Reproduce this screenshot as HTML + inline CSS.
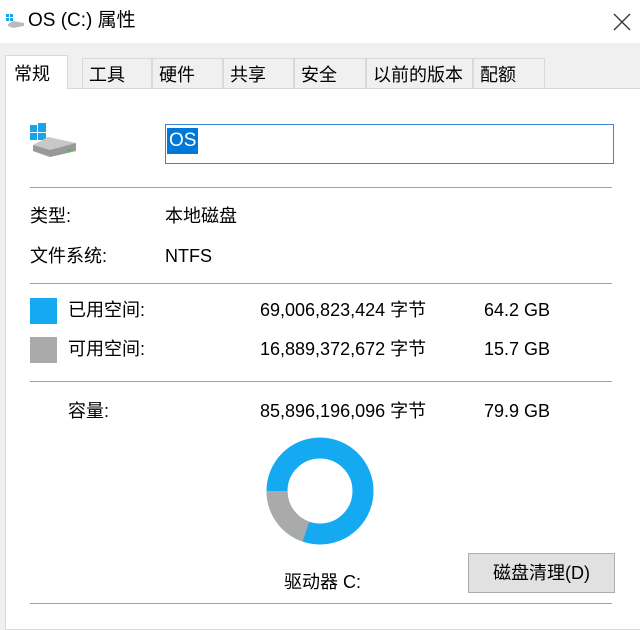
<!DOCTYPE html>
<html><head><meta charset="utf-8"><style>
body{margin:0;width:640px;height:624px;background:#f0f0f0;position:relative;overflow:hidden;font-family:"Liberation Sans","Noto Sans CJK SC",sans-serif;color:#000;font-size:18px}
.a{position:absolute;white-space:nowrap;line-height:22px}
.title{position:absolute;left:0;top:0;width:640px;height:43px;background:#fff}
.panel{position:absolute;left:5px;top:88px;width:640px;height:540px;background:#fff;border:1px solid #d9d9d9}
.tab{position:absolute;top:58px;height:30px;background:#f0f0f0;border:1px solid #d9d9d9;border-bottom:none;font-size:18px;line-height:32px;padding-left:6px;box-sizing:border-box}
.sep{position:absolute;left:30px;width:582px;height:1px;background:#a0a0a0}
</style></head><body>
<div class="title"></div>
<svg class="a" style="left:5px;top:13px" width="20" height="16"><rect x="1" y="1" width="3" height="3" fill="#1aa3e8"/><rect x="5" y="1" width="3" height="3" fill="#1aa3e8"/><rect x="1" y="5" width="3" height="3" fill="#1aa3e8"/><rect x="5" y="5" width="3" height="3" fill="#1aa3e8"/><path d="M3 11 L8 8 L19 10 L19 13 L8 15 L3 13Z" fill="#bbb"/></svg>
<div class="a" style="left:28px;top:10px;font-size:19px">OS (C:) 属性</div>
<svg class="a" style="left:612px;top:12px" width="20" height="20"><path d="M2 2 L18 18 M18 2 L2 18" stroke="#333" stroke-width="1.3"/></svg>
<div class="panel"></div>
<div class="tab" style="left:5px;top:55px;width:63px;height:34px;background:#fff;z-index:2;padding-left:8px;line-height:36px">常规</div>
<div class="tab" style="left:82px;width:70px">工具</div>
<div class="tab" style="left:152px;width:71px">硬件</div>
<div class="tab" style="left:223px;width:71px">共享</div>
<div class="tab" style="left:294px;width:72px">安全</div>
<div class="tab" style="left:366px;width:107px">以前的版本</div>
<div class="tab" style="left:473px;width:72px">配额</div>
<svg class="a" style="left:30px;top:123px" width="50" height="36"><rect x="0" y="2" width="7" height="7" fill="#1aa3e8"/><rect x="8" y="0" width="8" height="9" fill="#1aa3e8"/><rect x="0" y="10" width="7" height="7" fill="#1aa3e8"/><rect x="8" y="10" width="8" height="7" fill="#1aa3e8"/><path d="M3 22 L18 14 L46 20 L46 28 L20 34 L3 28Z" fill="#c8c8c8"/><path d="M3 22 L20 27 L46 20 L46 28 L20 34 L3 28Z" fill="#999"/><rect x="38" y="26" width="3" height="2" fill="#3c3"/></svg>
<div class="a" style="left:165px;top:124px;width:447px;height:38px;border:1px solid #3d86d6;background:#fff"></div>
<div class="a" style="left:167px;top:128px;background:#0078d7;color:#fff;font-size:19px;line-height:26px;padding:0 2px">OS</div>
<div class="sep" style="top:187px"></div>
<div class="a" style="left:30px;top:205px">类型:</div>
<div class="a" style="left:165px;top:205px">本地磁盘</div>
<div class="a" style="left:30px;top:245px">文件系统:</div>
<div class="a" style="left:165px;top:245px">NTFS</div>
<div class="sep" style="top:283px"></div>
<div class="a" style="left:30px;top:298px;width:27px;height:26px;background:#14a9f0"></div>
<div class="a" style="left:68px;top:299px">已用空间:</div>
<div class="a" style="left:260px;top:299px">69,006,823,424 字节</div>
<div class="a" style="left:484px;top:299px">64.2 GB</div>
<div class="a" style="left:30px;top:337px;width:27px;height:26px;background:#aaa"></div>
<div class="a" style="left:68px;top:338px">可用空间:</div>
<div class="a" style="left:260px;top:338px">16,889,372,672 字节</div>
<div class="a" style="left:484px;top:338px">15.7 GB</div>
<div class="sep" style="top:381px"></div>
<div class="a" style="left:68px;top:400px">容量:</div>
<div class="a" style="left:260px;top:400px">85,896,196,096 字节</div>
<div class="a" style="left:484px;top:400px">79.9 GB</div>
<svg class="a" style="left:266px;top:437px" width="108" height="108" viewBox="-54 -54 108 108">
<circle r="43" fill="none" stroke="#14a9f0" stroke-width="21"/>
<path d="M-43 0 A43 43 0 0 0 -14 40.6" fill="none" stroke="#aaa" stroke-width="21"/>
</svg>
<div class="a" style="left:284px;top:571px">驱动器 C:</div>
<div class="a" style="left:468px;top:553px;width:145px;height:38px;background:#e1e1e1;border:1px solid #adadad;text-align:center;line-height:38px;font-size:18px">磁盘清理(D)</div>
<div class="sep" style="top:603px"></div>
</body></html>
